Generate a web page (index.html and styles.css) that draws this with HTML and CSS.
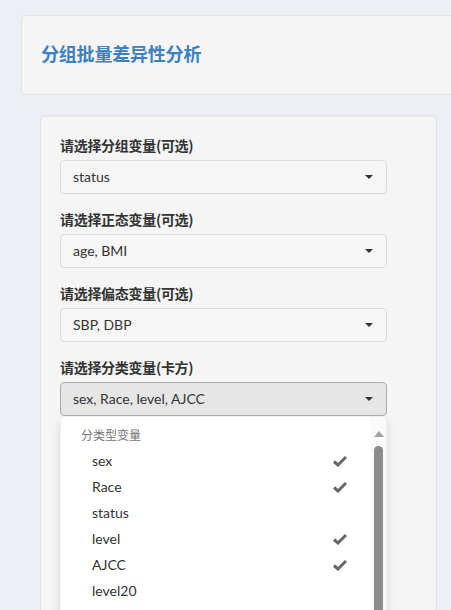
FILE: index.html
```html
<!DOCTYPE html>
<html lang="zh">
<head>
<meta charset="utf-8">
<title>分组批量差异性分析</title>
<link rel="stylesheet" href="styles.css">
</head>
<body>
<div class="page">
  <div class="title-box">
    <h2 class="title">分组批量差异性分析</h2>
  </div>
  <div class="well">
    <div class="form-group">
      <label class="lbl">请选择分组变量(可选)</label>
      <div class="select"><span class="sel-text">status</span><span class="caret"></span></div>
    </div>
    <div class="form-group">
      <label class="lbl">请选择正态变量(可选)</label>
      <div class="select"><span class="sel-text">age, BMI</span><span class="caret"></span></div>
    </div>
    <div class="form-group">
      <label class="lbl">请选择偏态变量(可选)</label>
      <div class="select"><span class="sel-text">SBP, DBP</span><span class="caret"></span></div>
    </div>
    <div class="form-group open">
      <label class="lbl">请选择分类变量(卡方)</label>
      <div class="select active"><span class="sel-text">sex, Race, level, AJCC</span><span class="caret"></span></div>
      <div class="menu">
        <ul class="list">
          <li class="header">分类型变量</li>
          <li class="opt"><span>sex</span><svg class="check" viewBox="0 0 14 12"><path d="M1 6.5 L5 10 L13 2" /></svg></li>
          <li class="opt"><span>Race</span><svg class="check" viewBox="0 0 14 12"><path d="M1 6.5 L5 10 L13 2" /></svg></li>
          <li class="opt"><span>status</span></li>
          <li class="opt"><span>level</span><svg class="check" viewBox="0 0 14 12"><path d="M1 6.5 L5 10 L13 2" /></svg></li>
          <li class="opt"><span>AJCC</span><svg class="check" viewBox="0 0 14 12"><path d="M1 6.5 L5 10 L13 2" /></svg></li>
          <li class="opt"><span>level20</span></li>
        </ul>
        <div class="scrollbar">
          <span class="arrow-up"></span>
          <span class="thumb"></span>
        </div>
      </div>
    </div>
  </div>
</div>
</body>
</html>
```
FILE: styles.css
```css
html, body {
  margin: 0;
  padding: 0;
  background: #ecf0f5;
  overflow: hidden;
  height: 610px;
}
body {
  font-family: "Lato", "Noto Sans CJK SC", sans-serif;
  font-size: 14px;
  color: #333;
  line-height: 1.42857;
}
.page {
  padding-top: 15px;
}
.title-box {
  margin-left: 21px;
  width: 460px;
  height: 80px;
  box-sizing: border-box;
  background: #f5f5f5;
  border: 1px solid #e3e3e3;
  border-radius: 4px;
  display: flex;
  align-items: center;
  padding-left: 19px;
  padding-bottom: 2px;
}
.title {
  margin: 0;
  font-family: "Noto Sans CJK SC", sans-serif;
  font-size: 18px;
  font-weight: bold;
  color: #3c80bf;
  letter-spacing: -0.2px;
}
.well {
  margin-top: 20px;
  margin-left: 40px;
  width: 397px;
  height: 520px;
  box-sizing: border-box;
  background: #f5f5f5;
  border: 1px solid #e3e3e3;
  border-radius: 4px;
  box-shadow: inset 0 1px 1px rgba(0,0,0,.05);
  padding: 19px 19px;
}
.form-group {
  margin-bottom: 15px;
  position: relative;
}
.lbl {
  display: block;
  font-family: "Noto Sans CJK SC", sans-serif;
  font-weight: bold;
  font-size: 14px;
  line-height: 20px;
  margin-bottom: 5px;
  color: #333;
  letter-spacing: -0.3px;
}
.select {
  width: 327px;
  height: 34px;
  box-sizing: border-box;
  border: 1px solid #dcdcdc;
  border-radius: 4px;
  background: #f6f6f6;
  display: flex;
  align-items: center;
  justify-content: space-between;
  padding: 0 12px 0 12px;
}
.select.active {
  background: #e6e6e6;
  border-color: #adadad;
}
.sel-text {
  font-size: 14px;
  color: #333;
}
.caret {
  width: 0;
  height: 0;
  border-left: 4px solid transparent;
  border-right: 4px solid transparent;
  border-top: 4px solid #333;
  margin-right: 1px;
}
.menu {
  position: absolute;
  top: 59px;
  left: 0;
  width: 327px;
  height: 200px;
  box-sizing: border-box;
  background: #fff;
  border-radius: 4px;
  box-shadow: 0 6px 12px rgba(0,0,0,.12);
  border: 1px solid #f0f0f0;
  overflow: hidden;
}
.list {
  list-style: none;
  margin: 0;
  padding: 5px 0 0 0;
}
.header {
  font-family: "Noto Sans CJK SC", sans-serif;
  font-size: 12px;
  color: #777;
  padding: 4px 20px 5px;
  line-height: 17px;
}
.opt {
  display: flex;
  align-items: center;
  justify-content: space-between;
  height: 26px;
  padding-left: 31px;
  padding-right: 39px;
  color: #333;
}
.check {
  width: 14px;
  height: 12px;
  fill: none;
  stroke: #666;
  stroke-width: 3;
  stroke-linecap: butt;
  stroke-linejoin: miter;
}
.scrollbar {
  position: absolute;
  top: 0;
  right: 0;
  width: 15px;
  height: 100%;
  background: #fafafa;
}
.arrow-up {
  position: absolute;
  top: 14px;
  left: 3px;
  width: 0;
  height: 0;
  border-left: 5px solid transparent;
  border-right: 5px solid transparent;
  border-bottom: 6px solid #a3a3a3;
}
.thumb {
  position: absolute;
  top: 29px;
  left: 3px;
  width: 9px;
  height: 200px;
  background: #8c8c8c;
  border-radius: 5px 5px 0 0;
}
```
